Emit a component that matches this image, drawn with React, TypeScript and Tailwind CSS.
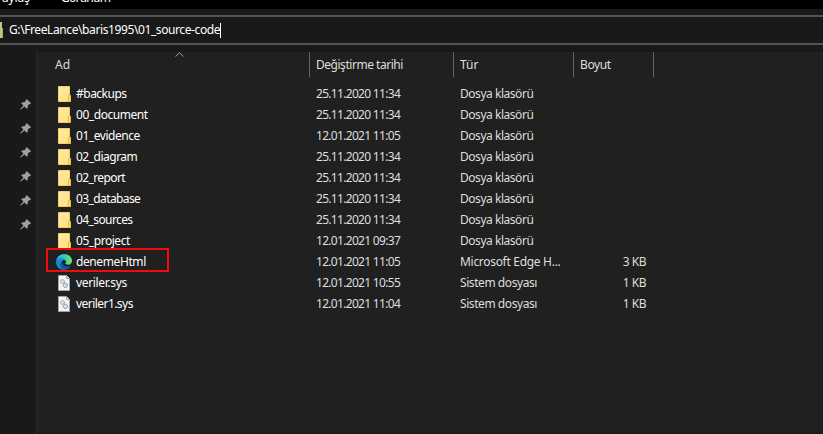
import React from "react";

type Entry = {
  name: string;
  kind: "folder" | "edge" | "sys";
  date: string;
  type: string;
  size?: string;
  tracking: string;
  typeTracking: string;
};

const entries: Entry[] = [
  { name: "#backups", kind: "folder", date: "25.11.2020 11:34", type: "Dosya klasörü", tracking: "tracking-[-0.5px]", typeTracking: "tracking-[-0.46px]" },
  { name: "00_document", kind: "folder", date: "25.11.2020 11:34", type: "Dosya klasörü", tracking: "tracking-[-0.45px]", typeTracking: "tracking-[-0.46px]" },
  { name: "01_evidence", kind: "folder", date: "12.01.2021 11:05", type: "Dosya klasörü", tracking: "tracking-[-0.45px]", typeTracking: "tracking-[-0.46px]" },
  { name: "02_diagram", kind: "folder", date: "25.11.2020 11:34", type: "Dosya klasörü", tracking: "tracking-[-0.5px]", typeTracking: "tracking-[-0.46px]" },
  { name: "02_report", kind: "folder", date: "25.11.2020 11:34", type: "Dosya klasörü", tracking: "tracking-[-0.6px]", typeTracking: "tracking-[-0.46px]" },
  { name: "03_database", kind: "folder", date: "25.11.2020 11:34", type: "Dosya klasörü", tracking: "tracking-[-0.6px]", typeTracking: "tracking-[-0.46px]" },
  { name: "04_sources", kind: "folder", date: "25.11.2020 11:34", type: "Dosya klasörü", tracking: "tracking-[-0.6px]", typeTracking: "tracking-[-0.46px]" },
  { name: "05_project", kind: "folder", date: "12.01.2021 09:37", type: "Dosya klasörü", tracking: "tracking-[-0.45px]", typeTracking: "tracking-[-0.46px]" },
  { name: "denemeHtml", kind: "edge", date: "12.01.2021 11:05", type: "Microsoft Edge H...", size: "3 KB", tracking: "tracking-[-0.4px]", typeTracking: "tracking-[-0.3px]" },
  { name: "veriler.sys", kind: "sys", date: "12.01.2021 10:55", type: "Sistem dosyası", size: "1 KB", tracking: "tracking-[-0.35px]", typeTracking: "tracking-[-0.43px]" },
  { name: "veriler1.sys", kind: "sys", date: "12.01.2021 11:04", type: "Sistem dosyası", size: "1 KB", tracking: "tracking-[-0.55px]", typeTracking: "tracking-[-0.43px]" },
];

function FolderIcon() {
  return (
    <svg width="16" height="18" viewBox="0 0 16 18" className="block">
      <defs>
        <linearGradient id="folder" x1="0" y1="0" x2="1" y2="1">
          <stop stopColor="#ffeba8" />
          <stop offset="1" stopColor="#ffdf7d" />
        </linearGradient>
      </defs>
      <path d="M2.500 1.500h11v9h1v6h-12z" fill="url(#folder)" stroke="#f5cf62" />
      <path d="M12.500 16.500v-6h2v6z" fill="#ffe07e" stroke="#ecba3c" />
    </svg>
  );
}

function EdgeIcon() {
  return (
    <svg width="16" height="16" viewBox="0 0 256 256" className="block">
      <defs>
        <linearGradient id="base" x1="60" y1="180" x2="240" y2="180" gradientUnits="userSpaceOnUse">
          <stop stopColor="#0c59a4" />
          <stop offset="1" stopColor="#1258a4" />
        </linearGradient>
        <linearGradient id="left" x1="150" y1="100" x2="45" y2="220" gradientUnits="userSpaceOnUse">
          <stop stopColor="#1b9de2" />
          <stop offset="0.6" stopColor="#1286d8" />
          <stop offset="1" stopColor="#0d8be0" />
        </linearGradient>
        <linearGradient id="top" x1="10" y1="90" x2="245" y2="110" gradientUnits="userSpaceOnUse">
          <stop stopColor="#35b5ee" />
          <stop offset="0.5" stopColor="#36c7b4" />
          <stop offset="1" stopColor="#66eb6e" />
        </linearGradient>
      </defs>
      <path
        d="M231 190.5c-3.400 1.800-6.900 3.400-10.500 4.700a101.700 101.700 0 0 1-35.900 6.500c-47.300 0-88.500-32.500-88.500-74.300a31.500 31.500 0 0 1 16.400-27.300c-42.800 1.800-53.800 46.400-53.800 72.500 0 73.900 68.100 81.400 82.800 81.400 7.900 0 19.800-2.300 27-4.600l1.300-.4a128.300 128.300 0 0 0 66.600-52.800 4 4 0 0 0-5.400-5.700z"
        fill="url(#base)"
      />
      <path
        d="M105.700 241.400a79.200 79.200 0 0 1-22.700-21.300 80.700 80.700 0 0 1 29.500-120c3.200-1.500 8.500-4.100 15.600-4a32.400 32.400 0 0 1 25.700 13 31.900 31.900 0 0 1 6.300 18.700c0-.2 24.500-79.600-80-79.600C36.200 48.200.1 89.900.1 126.500a130.600 130.600 0 0 0 12.100 56 128 128 0 0 0 156.400 67.100 75.500 75.500 0 0 1-62.800-8z"
        fill="url(#left)"
      />
      <path
        d="M152.300 148.900c-.9 1-3.400 2.500-3.400 5.600 0 2.600 1.700 5.200 4.800 7.300 14.300 10 41.400 8.600 41.500 8.600a59.600 59.600 0 0 0 30.300-8.300 61.400 61.400 0 0 0 30.400-52.900c.3-22.400-8-37.300-11.300-43.900C223.500 23.900 177.700 0 128 0A128 128 0 0 0 0 126.200c.5-36.500 36.800-66 80-66 3.500 0 23.500.3 42 10.100 16.300 8.600 24.900 18.900 30.800 29.200 6.200 10.700 7.300 24.100 7.300 29.500s-2.700 13.300-7.800 19.900z"
        fill="url(#top)"
      />
    </svg>
  );
}

function SysIcon() {
  return (
    <svg width="12" height="16" viewBox="0 0 12 16" className="block">
      <path d="M.5.5h8l3 3v12H.5z" fill="#f4f4f4" stroke="#a4a4a4" />
      <path d="M8.500.5v3h3" fill="#dcdcdc" stroke="#a4a4a4" />
      <circle cx="4.500" cy="6.500" r="1.900" fill="#dfe6ec" stroke="#8294a3" strokeDasharray="1.200 .4" />
      <circle cx="7.300" cy="10.300" r="2.200" fill="#d5e0ea" stroke="#74899b" strokeDasharray="1.200 .4" />
    </svg>
  );
}

function Pin() {
  return (
    <svg width="11" height="11" viewBox="0 0 11 11" className="block">
      <path d="M6.700 0 11 4.300 10.300 5 9.500 4.900 7.700 6.800 7.800 8.700 6.700 9.800 4.400 7.500.7 10.700.2 10.300 3.400 6.500 1.200 4.300 2.300 3.200 4.200 3.300 6.100 1.500 6 .7z" fill="#98a0a8" />
    </svg>
  );
}

const icons = { folder: <FolderIcon />, edge: <EdgeIcon />, sys: <SysIcon /> };

export default function App() {
  return (
    <div className="flex h-[434px] w-[823px] flex-col overflow-hidden bg-[#191919] font-['Noto_Sans','Open_Sans',sans-serif] text-[12px] leading-[16px] whitespace-pre text-[#dedede]">
      <div className="flex h-[9px] shrink-0 bg-black text-white">
        <span className="-mt-[10px] -ml-[5px] w-[66px] tracking-[-0.2px]">Paylaş</span>
        <span className="-mt-[10px] tracking-[-0.75px]">Görünüm</span>
      </div>
      <div className="mt-[6px] flex h-[30px] shrink-0 items-center border-y-2 border-[#535353] text-white">
        <span className="flex h-[16px] w-[3px] items-end">
          <span className="h-full w-[2px] bg-[#c3c583]" />
          <span className="h-[10px] w-px bg-[#a9ad62]" />
        </span>
        <span className="ml-[6px] tracking-[-0.4px]">{"G:\\FreeLance\\baris1995\\01_source-code"}</span>
        <span className="h-[15px] w-px bg-white" />
      </div>
      <div className="mt-[7px] flex min-h-0 flex-1">
        <aside className="flex w-[37px] shrink-0 flex-col gap-[13px] border-r border-[#2b2b2b] pt-[47px] pl-[20px]">
          <Pin />
          <Pin />
          <Pin />
          <Pin />
          <Pin />
          <Pin />
        </aside>
        <main className="min-w-0 flex-1 border-b-2 border-[#1b1b1b] bg-[#202020]">
          <header className="flex h-[25px] items-center">
            <div className="relative flex h-full w-[273px] items-center border-r border-[#636363] pl-[18px]">
              Ad
              <svg width="9" height="5" viewBox="0 0 9 5" className="absolute top-0 left-[138px]">
                <path d="M.5 4.500 4.500.8 8.500 4.500" fill="none" stroke="#999" />
              </svg>
            </div>
            <div className="flex h-full w-[144px] items-center border-r border-[#636363] pl-[6px] tracking-[-0.47px]">Değiştirme tarihi</div>
            <div className="flex h-full w-[120px] items-center border-r border-[#636363] pl-[6px]">Tür</div>
            <div className="flex h-full w-[80px] items-center border-r border-[#636363] pl-[6px] tracking-[-0.4px]">Boyut</div>
          </header>
          <div className="pt-[6px]">
            {entries.map((e) => (
              <div key={e.name} className="relative flex h-[21px] items-center">
                <div className="ml-[19px] flex w-[16px] shrink-0 justify-center">{icons[e.kind]}</div>
                <div className="w-[244px] pl-[4px] text-white">
                  <span className={e.tracking}>{e.name}</span>
                </div>
                <div className="w-[144px] tracking-[-0.69px]">{e.date}</div>
                <div className="w-[120px]">
                  <span className={e.typeTracking}>{e.type}</span>
                </div>
                <div className="w-[66px] text-right tracking-[-0.5px]">{e.size}</div>
                {e.kind === "edge" && (
                  <div className="absolute -top-[3px] left-[9px] h-[24px] w-[123px] rounded-[1px] border-2 border-[#f50a0a]" />
                )}
              </div>
            ))}
          </div>
        </main>
      </div>
    </div>
  );
}
